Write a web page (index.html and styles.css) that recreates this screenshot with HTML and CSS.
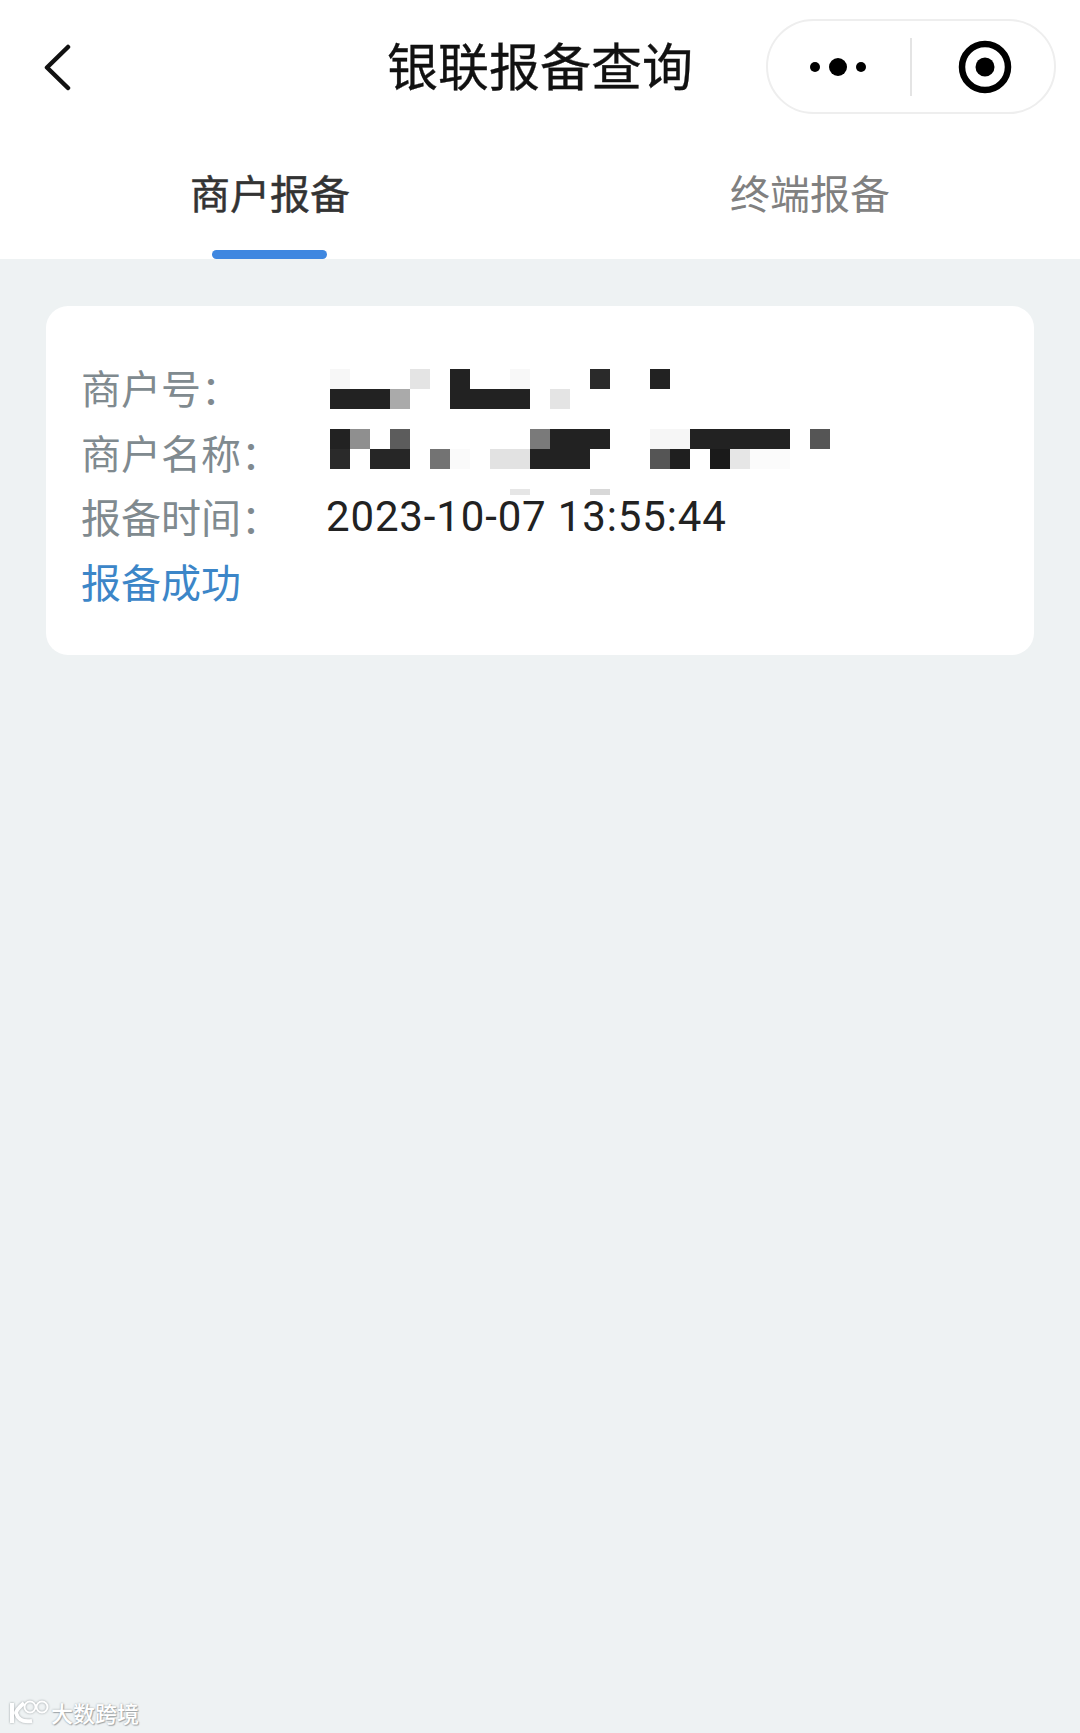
FILE: index.html
```html
<!DOCTYPE html>
<html lang="zh-CN">
<head>
  <meta charset="UTF-8">
  <meta name="viewport" content="width=device-width, initial-scale=1.0">
  <title>银联报备查询</title>
  <link rel="stylesheet" href="styles.css">
</head>
<body>
  <!-- Top navigation bar -->
  <header class="nav">
    <svg class="nav-back" width="30" height="50" viewBox="0 0 30 50">
      <path d="M24 5 L3 25.5 L24 46" fill="none" stroke="#111" stroke-width="4.5" stroke-linecap="round" stroke-linejoin="round"/>
    </svg>
    <h1 class="nav-title">银联报备查询</h1>
    <div class="capsule">
      <svg class="capsule-more" width="60" height="24" viewBox="0 0 60 24">
        <circle cx="7" cy="12" r="5" fill="#000"/>
        <circle cx="30" cy="12" r="9" fill="#000"/>
        <circle cx="53" cy="12" r="5" fill="#000"/>
      </svg>
      <span class="capsule-line"></span>
      <svg class="capsule-target" width="54" height="54" viewBox="0 0 54 54">
        <circle cx="27" cy="27" r="23" fill="none" stroke="#000" stroke-width="6.5"/>
        <circle cx="27" cy="27" r="9.5" fill="#000"/>
      </svg>
    </div>
  </header>

  <!-- Tabs -->
  <nav class="tabs">
    <div class="tab active">商户报备</div>
    <div class="tab">终端报备</div>
  </nav>

  <main class="content">
    <section class="card">
      <div class="row"><span class="row-label">商户号：</span></div>
      <div class="row"><span class="row-label">商户名称：</span></div>
      <div class="row">
        <span class="row-label">报备时间：</span>
        <span class="row-value">2023-10-07 13:55:44</span>
      </div>
      <div class="row status">报备成功</div>

      <!-- Mosaic hiding the merchant number and name -->
      <svg class="mosaic" width="510" height="130" viewBox="0 0 510 130" shape-rendering="crispEdges">
        <rect x="0" y="0" width="20" height="20" fill="#f7f7f7"/>
        <rect x="80" y="0" width="20" height="20" fill="#e4e4e4"/>
        <rect x="120" y="0" width="20" height="20" fill="#222"/>
        <rect x="180" y="0" width="20" height="20" fill="#f8f8f8"/>
        <rect x="260" y="0" width="20" height="20" fill="#2a2a2a"/>
        <rect x="320" y="0" width="20" height="20" fill="#222"/>

        <rect x="0" y="20" width="60" height="20" fill="#222"/>
        <rect x="60" y="20" width="20" height="20" fill="#aaa"/>
        <rect x="120" y="20" width="80" height="20" fill="#222"/>
        <rect x="220" y="20" width="20" height="20" fill="#e4e4e4"/>

        <rect x="0" y="60" width="20" height="20" fill="#222"/>
        <rect x="20" y="60" width="20" height="20" fill="#8f8f8f"/>
        <rect x="60" y="60" width="20" height="20" fill="#5c5c5c"/>
        <rect x="200" y="60" width="20" height="20" fill="#7a7a7a"/>
        <rect x="220" y="60" width="60" height="20" fill="#222"/>
        <rect x="320" y="60" width="40" height="20" fill="#f6f6f6"/>
        <rect x="360" y="60" width="100" height="20" fill="#222"/>
        <rect x="480" y="60" width="20" height="20" fill="#555"/>

        <rect x="0" y="80" width="20" height="20" fill="#2a2a2a"/>
        <rect x="40" y="80" width="40" height="20" fill="#262626"/>
        <rect x="100" y="80" width="20" height="20" fill="#737373"/>
        <rect x="120" y="80" width="20" height="20" fill="#fafafa"/>
        <rect x="160" y="80" width="40" height="20" fill="#e2e2e2"/>
        <rect x="200" y="80" width="60" height="20" fill="#222"/>
        <rect x="320" y="80" width="20" height="20" fill="#555"/>
        <rect x="340" y="80" width="20" height="20" fill="#1f1f1f"/>
        <rect x="380" y="80" width="20" height="20" fill="#1a1a1a"/>
        <rect x="400" y="80" width="20" height="20" fill="#e6e6e6"/>
        <rect x="420" y="80" width="40" height="20" fill="#fbfbfb"/>

        <rect x="180" y="120" width="20" height="6" fill="#e6e6e6"/>
        <rect x="260" y="120" width="20" height="6" fill="#d8d8d8"/>
      </svg>
    </section>
  </main>

  <!-- Repost watermark -->
  <div class="watermark">
    <svg class="watermark-logo" width="42" height="28" viewBox="0 0 42 28">
      <path d="M4 5 V25 M16 5 Q8 12 8 15 Q11 25 24 23" fill="none" stroke="#fff" stroke-width="4"/>
      <circle cx="22" cy="9" r="5.5" fill="none" stroke="#fff" stroke-width="2"/>
      <circle cx="34" cy="9" r="5.5" fill="none" stroke="#fff" stroke-width="2"/>
    </svg>
    <span class="watermark-text">大数跨境</span>
  </div>
</body>
</html>
```

FILE: styles.css
```css
* {
  box-sizing: border-box;
}

html, body {
  margin: 0;
  padding: 0;
}

body {
  position: relative;
  width: 1080px;
  height: 1733px;
  overflow: hidden;
  display: flex;
  flex-direction: column;
  background: #eef2f3;
  font-family: "Noto Sans CJK SC", "Noto Sans", sans-serif;
}

/* Navigation bar */
.nav {
  height: 134px;
  padding: 19px 24px 20px 44px;
  display: flex;
  align-items: center;
  justify-content: space-between;
  position: relative;
  background: #fff;
}

.nav-back {
  display: block;
}

.nav-title {
  position: absolute;
  left: 0;
  right: 0;
  top: 27px;
  margin: 0;
  text-align: center;
  font-size: 51px;
  line-height: 74px;
  font-weight: 400;
  color: #111;
  -webkit-text-stroke: 0.3px #111;
}

/* Capsule buttons */
.capsule {
  width: 290px;
  height: 95px;
  padding-left: 40px;
  display: flex;
  align-items: center;
  border: 2px solid #eeeeee;
  border-radius: 48px;
  background: #fff;
}

.capsule-line {
  width: 2px;
  height: 58px;
  margin-left: 42px;
  background: #e4e4e4;
}

.capsule-target {
  margin-left: 46px;
}

/* Tabs */
.tabs {
  height: 125px;
  display: flex;
  background: #fff;
}

.tab {
  flex: 1;
  position: relative;
  padding-top: 29px;
  text-align: center;
  font-size: 40px;
  line-height: 58px;
  color: #808080;
}

.tab.active {
  color: #333;
  -webkit-text-stroke: 0.5px #333;
}

.tab.active::after {
  content: "";
  position: absolute;
  left: 212px;
  bottom: 0;
  width: 115px;
  height: 9px;
  border-radius: 5px;
  background: #3f87e0;
}

/* Content */
.content {
  flex: 1;
  padding: 47px 46px 0;
}

.card {
  position: relative;
  height: 349px;
  padding: 49px 35px 42px;
  border-radius: 22px;
  background: #fff;
}

.row {
  height: 64.5px;
  display: flex;
  align-items: center;
  font-size: 40px;
  line-height: 64px;
}

.row-label {
  width: 245px;
  color: #808a8f;
}

.row-value {
  padding-top: 1px;
  font-family: Roboto, "Liberation Sans", sans-serif;
  font-size: 42px;
  letter-spacing: 0.85px;
  color: #222;
}

.status {
  color: #3c86c8;
}

.mosaic {
  position: absolute;
  left: 284px;
  top: 63px;
}

/* Watermark */
.watermark {
  position: absolute;
  left: 8px;
  bottom: 6px;
  display: flex;
  align-items: center;
  gap: 1px;
}

.watermark-logo {
  filter: drop-shadow(0 0 1px #9aa0a3);
}

.watermark-text {
  font-size: 22px;
  line-height: 30px;
  font-weight: 500;
  color: #fff;
  text-shadow: 0 0 2px #9aa0a3, 1px 1px 1px #a4aaad;
}
```
